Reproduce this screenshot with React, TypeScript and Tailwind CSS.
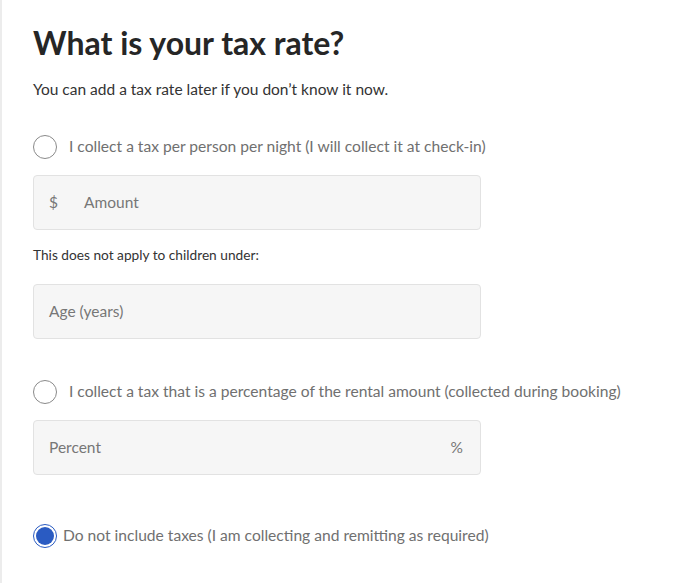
import React from "react";

function Radio({ checked }: { checked?: boolean }) {
  if (checked) {
    return (
      <span className="flex h-[24px] w-[24px] shrink-0 items-center justify-center rounded-full border-[1.5px] border-[#2a5bc2] bg-white">
        <span className="h-[18px] w-[18px] rounded-full bg-[#2a5bc2]" />
      </span>
    );
  }
  return <span className="block h-[24px] w-[24px] shrink-0 rounded-full border border-[#8a8a8a] bg-white" />;
}

export default function App() {
  return (
    <div className="min-h-[583px] w-[688px] border-l-2 border-[#ececec] bg-white" style={{ fontFamily: "Lato, 'Open Sans', sans-serif" }}>
      <div className="pl-[31px] pt-[25px]">
        <h1 className="text-[32px] font-bold leading-[36px] text-[#262626]">What is your tax rate?</h1>
        <p className="mt-[18px] text-[15.5px] leading-[20px] text-[#333]">You can add a tax rate later if you don’t know it now.</p>

        <label className="mt-[36px] flex items-center gap-[12px]">
          <Radio />
          <span className="text-[15.6px] text-[#707070]">I collect a tax per person per night (I will collect it at check-in)</span>
        </label>

        <div className="mt-[16px] flex h-[55px] w-[448px] items-center rounded-[4px] border border-[#e2e2e2] bg-[#f6f6f6] px-[15px] text-[15.5px] text-[#777]">
          <span className="w-[35px]">$</span>
          <span>Amount</span>
        </div>

        <p className="mt-[16px] text-[13.7px] leading-[18px] text-[#333]">This does not apply to children under:</p>

        <div className="mt-[20px] flex h-[55px] w-[448px] items-center rounded-[4px] border border-[#e2e2e2] bg-[#f6f6f6] px-[15px] text-[15.5px] text-[#777]">
          <span>Age (years)</span>
        </div>

        <label className="mt-[41px] flex items-center gap-[12px]">
          <Radio />
          <span className="text-[15.6px] text-[#707070]">I collect a tax that is a percentage of the rental amount (collected during booking)</span>
        </label>

        <div className="mt-[16px] flex h-[55px] w-[448px] items-center justify-between rounded-[4px] border border-[#e2e2e2] bg-[#f6f6f6] px-[15px] text-[15.5px] text-[#777]">
          <span>Percent</span>
          <span className="pr-[2px]">%</span>
        </div>

        <label className="mt-[49px] flex items-center gap-[6px]">
          <Radio checked />
          <span className="text-[15.6px] text-[#707070]">Do not include taxes (I am collecting and remitting as required)</span>
        </label>
      </div>
    </div>
  );
}
